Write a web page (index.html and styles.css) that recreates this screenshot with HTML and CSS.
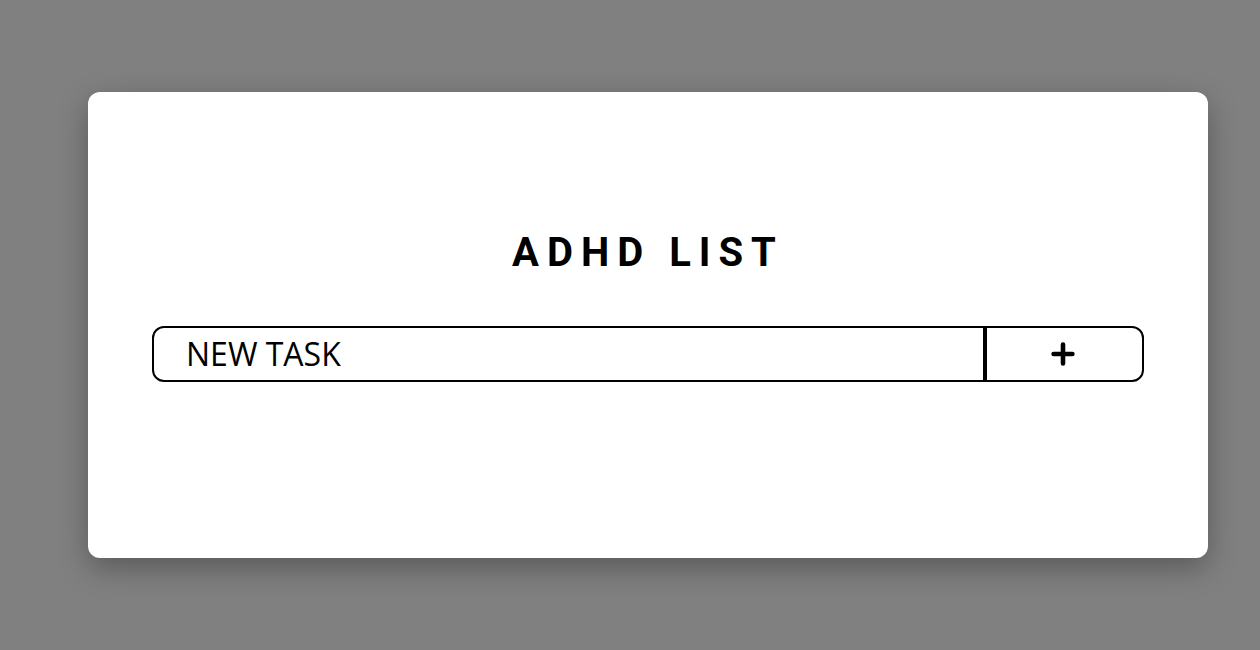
FILE: index.html
```html
<!DOCTYPE html>
<html lang="en">
<head>
<meta charset="utf-8">
<title>ADHD List</title>
<link rel="stylesheet" href="styles.css">
</head>
<body>
<main class="card">
  <h1 class="title">ADHD LIST</h1>
  <form class="task-form">
    <input class="task-input" type="text" value="NEW TASK">
    <button class="add-btn" type="button" aria-label="Add task">
      <svg width="24" height="24" viewBox="0 0 24 24"><path d="M12 2.6V21.4M2.6 12H21.4" stroke="#000" stroke-width="4.6" stroke-linecap="round" fill="none"/></svg>
    </button>
  </form>
</main>
</body>
</html>
```
FILE: styles.css
```css
* { box-sizing: border-box; }
html, body { margin: 0; padding: 0; }
body {
  background: #808080;
  width: 1260px;
  height: 650px;
  overflow: hidden;
  padding-top: 92px;
  padding-left: 88px;
}
.card {
  width: 1120px;
  height: 466px;
  background: #fff;
  border-radius: 12px;
  box-shadow: 0 10px 30px rgba(0, 0, 0, 0.3);
  padding: 141px 64px 0 64px;
}
.title {
  margin: 0;
  font-family: Roboto, "Liberation Sans", sans-serif;
  font-weight: 700;
  font-size: 40px;
  line-height: 40px;
  letter-spacing: 8px;
  text-align: center;
  color: #000;
}
.task-form {
  margin-top: 53px;
  display: flex;
  height: 56px;
  border: 2px solid #000;
  border-radius: 12px;
  overflow: hidden;
}
.task-input {
  flex: 1;
  min-width: 0;
  border: none;
  border-right: 4px solid #000;
  padding: 0 32px 2px 32px;
  font-family: "Open Sans", sans-serif;
  font-size: 32px;
  color: #000;
  background: transparent;
  outline: none;
}
.add-btn {
  width: 155px;
  border: none;
  background: transparent;
  display: flex;
  align-items: center;
  justify-content: center;
  padding: 0 4px 0 0;
  cursor: pointer;
}
.add-btn svg { display: block; }
```
